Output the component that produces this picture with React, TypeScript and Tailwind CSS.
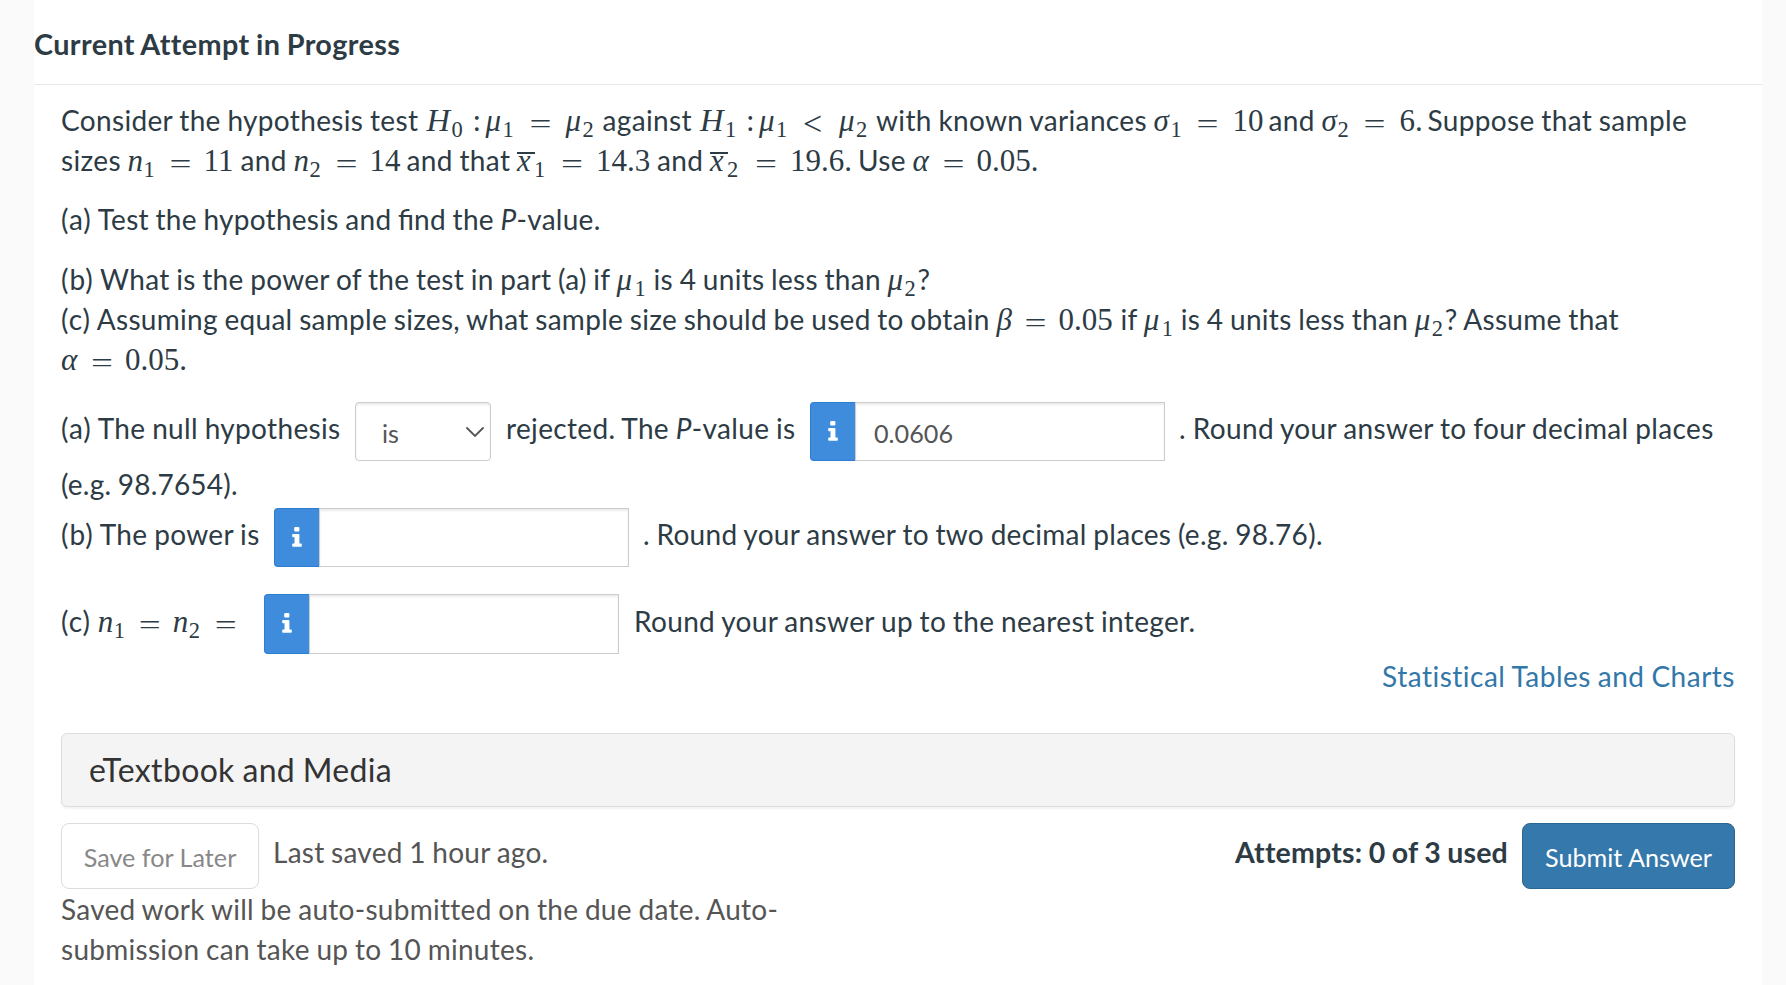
import React, { useState } from 'react';
import type { ReactNode } from 'react';

// One math token. The width class sets where the next token starts.
function Sym({ w, up, children }: { w: string; up?: boolean; children: ReactNode }) {
  return (
    <span
      className={`inline-block whitespace-pre font-['Liberation_Serif',serif] text-[31px] leading-[0] tracking-normal ${up ? '' : 'italic'} ${w}`}
    >
      {children}
    </span>
  );
}

function H() {
  return (
    <span className="ml-[1.5px] inline-block w-[25px] font-['Liberation_Serif',serif] text-[32.5px] leading-[0] tracking-normal italic">H</span>
  );
}

// Wide, flat equals sign
function Eq({ w }: { w: string }) {
  return (
    <span className={`inline-block align-[-6px] font-['Liberation_Serif',serif] text-[39px] leading-[0] tracking-normal scale-y-[0.7] ${w}`}>
      =
    </span>
  );
}

function Less({ w }: { w: string }) {
  return (
    <span className={`inline-block align-[-4px] font-['Liberation_Serif',serif] text-[34px] leading-[0] tracking-normal ${w}`}>
      &lt;
    </span>
  );
}

function Sub({ w, children }: { w: string; children: ReactNode }) {
  return (
    <span
      className={`inline-block align-[-5.5px] font-['Liberation_Serif',serif] text-[22.5px] leading-[0] tracking-normal ${w}`}
    >
      {children}
    </span>
  );
}

function XBar() {
  return (
    <span className="inline-block w-[17px] leading-[0] tracking-normal">
      <span className="-mr-[18px] inline-block h-[19px] w-[18px] border-t-2 border-[#2d3b45] align-baseline" />
      <span className="inline-block font-['Liberation_Serif',serif] text-[30.5px] italic">x</span>
    </span>
  );
}

function Part({ children }: { children: ReactNode }) {
  return <span className="tracking-[1px]">{children}</span>;
}

function Line({ children }: { children: ReactNode }) {
  return <div className="h-10 leading-10 whitespace-pre">{children}</div>;
}

function InfoInput({ value, onChange, height }: { value: string; onChange: (v: string) => void; height: string }) {
  return (
    <span className={`flex w-[355px] tracking-normal ${height}`}>
      <button className="flex w-[45px] items-center justify-center rounded-l border border-r-0 border-[#2d7dd2] bg-[#3f8cdc] pb-0.5">
        <svg width="10" height="20" viewBox="0 0 10 20" fill="#fff">
          <rect x="2.2" y="0" width="5.2" height="4.6" rx="1" />
          <path d="M1 7h5.6q.8 0 .8.8v8.6H9q.8 0 .8.8v1.8q0 .8-.8.8H1q-.8 0-.8-.8v-1.800q0-.8.8-.8h1.5v-6.200H1q-.8 0-.8-.8V7.800q0-.8.8-.8z" />
        </svg>
      </button>
      <input
        value={value}
        onChange={(e) => onChange(e.target.value)}
        className="w-[310px] border border-[#ccc] bg-white px-[18px] pt-1 text-[25.2px] text-[#555] shadow-[inset_0_2px_2px_rgba(0,0,0,0.075)] outline-none"
      />
    </span>
  );
}

function App() {
  const [pValue, setPValue] = useState('0.0606');
  const [power, setPower] = useState('');
  const [size, setSize] = useState('');

  return (
    <div className="h-[985px] overflow-hidden bg-[#fafafa] pl-[34px] pr-6 font-[Lato,sans-serif] text-[28px] text-[#2d3b45]">
      <div className="h-full bg-white">
        <header className="h-[85px] border-b border-[#e8e8e8] pt-6">
          <h1 className="text-[28.8px] font-bold leading-10 tracking-[0.37px] [word-spacing:-1px]">Current Attempt in Progress</h1>
        </header>

        <main className="px-[27px] pt-[15px] tracking-[0.34px] [word-spacing:-0.8px]">
          <Line>
            Consider the hypothesis test{' '}
            <H /><Sub w="w-[21px]">0</Sub><Sym up w="w-[13px]">:</Sym>
            <Sym w="w-[17px]">μ</Sym><Sub w="w-[27px]">1</Sub><Eq w="w-[36px]" />
            <Sym w="w-[17px]">μ</Sym><Sub w="w-[20px]">2</Sub>against{' '}
            <H /><Sub w="w-[21px]">1</Sub><Sym up w="w-[13px]">:</Sym>
            <Sym w="w-[17px]">μ</Sym><Sub w="w-[27px]">1</Sub><Less w="w-[36px]" />
            <Sym w="w-[17px]">μ</Sym><Sub w="w-[20px]">2</Sub>with known variances{' '}
            <Sym w="w-[17px]">σ</Sym><Sub w="w-[26px]">1</Sub><Eq w="w-[36px]" /><Sym up w="w-[36px]">10</Sym>and{' '}
            <Sym w="w-[16px]">σ</Sym><Sub w="w-[26px]">2</Sub><Eq w="w-[36px]" /><Sym up w="w-[28px]">6.</Sym>Suppose that sample
          </Line>
          <Line>
            sizes{' '}
            <Sym w="w-[16px]">n</Sym><Sub w="w-[26px]">1</Sub><Eq w="w-[34px]" /><Sym up w="w-[37px]">11</Sym>and{' '}
            <Sym w="w-[16px]">n</Sym><Sub w="w-[26px]">2</Sub><Eq w="w-[34px]" /><Sym up w="w-[37px]">14</Sym>and that{' '}
            <XBar /><Sub w="w-[27px]">1</Sub><Eq w="w-[35px]" /><Sym up w="w-[61px]">14.3</Sym>and{' '}
            <XBar /><Sub w="w-[28px]">2</Sub><Eq w="w-[35px]" /><Sym up w="w-[68px]">19.6.</Sym>Use{' '}
            <Sym w="w-[30px]">α</Sym><Eq w="w-[34px]" /><Sym up w="w-[64px]">0.05.</Sym>
          </Line>

          <div className="mt-[19px] tracking-[0.28px]">
            <Line>
              <Part>(a)</Part> Test the hypothesis and <span className="tracking-normal">fi</span>nd the <i>P</i>-value.
            </Line>
          </div>

          <div className="mt-5 tracking-[0.29px]">
            <Line>
              <Part>(b)</Part> What is the power of the test in part (a) if{' '}
              <Sym w="w-[18px]">μ</Sym><Sub w="w-[19px]">1</Sub>is 4 units less than{' '}
              <Sym w="w-[17px]">μ</Sym><Sub w="w-[13px]">2</Sub>?
            </Line>
            <Line>
              <Part>(c)</Part> Assuming equal sample sizes, what sample size should be used to obtain{' '}
              <Sym w="w-[28px]">β</Sym><Eq w="w-[34px]" /><Sym up w="w-[62px]">0.05</Sym>if{' '}
              <Sym w="w-[18px]">μ</Sym><Sub w="w-[19px]">1</Sub>is 4 units less than{' '}
              <Sym w="w-[17px]">μ</Sym><Sub w="w-[13px]">2</Sub>? Assume that
            </Line>
            <Line>
              <Sym w="w-[30px]">α</Sym><Eq w="w-[34px]" /><Sym up w="w-[64px]">0.05.</Sym>
            </Line>
          </div>

          <div className="mt-[23px] flex h-[59px] items-start">
            <span className="w-[294px] pt-[6px] leading-10"><Part>(a)</Part> The null hypothesis</span>
            <button className="flex h-[59px] w-[136px] items-center justify-between rounded border border-[#c7cdd1] pl-[26px] pr-[6px] tracking-normal text-[#555] shadow-[inset_0_2px_2px_rgba(0,0,0,0.075)]">
              <span className="pt-1 text-[25.2px]">is</span>
              <svg width="18" height="10" viewBox="0 0 18 10" fill="none" stroke="#555" strokeWidth="1.8" strokeLinecap="round">
                <path d="M1 1l8 8 8-8" />
              </svg>
            </button>
            <span className="w-[319px] pl-[15px] pt-[6px] leading-10">
              rejected. The <i>P</i>-value is
            </span>
            <InfoInput value={pValue} onChange={setPValue} height="h-[59px]" />
            <span className="whitespace-nowrap pl-[14px] pt-[6px] leading-10 tracking-[0.36px]">. Round your answer to four decimal places</span>
          </div>
          <div className="mt-[3px] tracking-[0.2px]">
            <Line>(e.g. 98.7654).</Line>
          </div>

          <div className="mt-1 flex h-[59px] items-start">
            <span className="w-[213px] pt-[6px] leading-10"><Part>(b)</Part> The power is</span>
            <InfoInput value={power} onChange={setPower} height="h-[59px]" />
            <span className="pl-[14px] pt-[6px] leading-10 tracking-[0.28px]">. Round your answer to two decimal places (e.g. 98.76).</span>
          </div>

          <div className="mt-[27px] flex h-[60px] items-start">
            <span className="w-[203px] whitespace-pre pt-[7px] leading-10">
              <Part>(c)</Part>{' '}
              <Sym w="w-[16px]">n</Sym><Sub w="w-[25px]">1</Sub><Eq w="w-[34px]" />
              <Sym w="w-[16px]">n</Sym><Sub w="w-[26px]">2</Sub><Eq w="w-[20px]" />
            </span>
            <InfoInput value={size} onChange={setSize} height="h-[60px]" />
            <span className="pl-[15px] pt-[7px] leading-10">Round your answer up to the nearest integer.</span>
          </div>

          <div className="mt-0.5 flex h-10 justify-end">
            <a href="#" className="leading-10 tracking-[0.5px] text-[#3277aa]">Statistical Tables and Charts</a>
          </div>

          <div className="mt-[37px] flex h-[74px] items-center rounded-md border border-[#ddd] bg-[#f4f4f4] pl-[27px] text-[32px] tracking-[0.33px] text-[#333] shadow-[0_2px_2px_rgba(0,0,0,0.05)]">
            eTextbook and Media
          </div>

          <div className="mt-4 flex h-[66px]">
            <button className="w-[198px] rounded-lg border border-[#ddd] pt-[3px] text-[25.2px] tracking-normal text-[#888] [word-spacing:0px]">Save for Later</button>
            <span className="pl-[14px] pt-[9px] leading-10 tracking-[0.25px] text-[#555]">Last saved 1 hour ago.</span>
            <span className="ml-auto pr-[14px] pt-[9px] text-[28.5px] font-bold leading-10 tracking-[0.2px]">Attempts: 0 of 3 used</span>
            <button className="w-[213px] rounded-lg border border-[#2b6590] bg-[#3578ab] pt-[3px] text-[25.2px] tracking-normal text-white [word-spacing:0px]">Submit Answer</button>
          </div>
          <div className="tracking-[0.28px] text-[#555]">
            <Line>Saved work will be auto-submitted on the due date. Auto-</Line>
            <Line>submission can take up to 10 minutes.</Line>
          </div>
        </main>
      </div>
    </div>
  );
}

export default App;
